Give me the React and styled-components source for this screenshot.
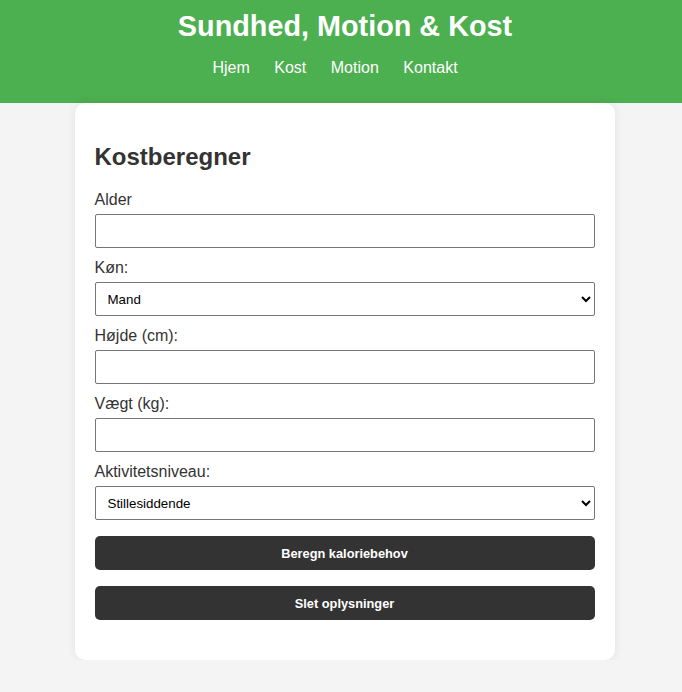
import React from "react"
import styled, { createGlobalStyle } from "styled-components"

const GlobalStyle = createGlobalStyle`
  body {
    margin: 0;
    background: #f4f4f4;
    font-family: "Liberation Sans", Arial, sans-serif;
    color: #333;
  }
`

const Header = styled.header`
  background: #4caf50;
  color: #fff;
  text-align: center;
  padding: 10px 0;
`

const Title = styled.h1`
  margin: 0;
  font-size: 28.8px;
  line-height: 32px;
  font-weight: bold;
  padding-left: 8px;
`

const Nav = styled.nav`
  display: flex;
  justify-content: center;
  gap: 24.5px;
  margin: 16px 0;
  padding-right: 12px;
  line-height: 19px;
`

const NavLink = styled.a`
  color: #fff;
  text-decoration: none;
  font-size: 16px;
`

const Page = styled.div`
  padding-left: 7px;
`

const Card = styled.main`
  width: 500px;
  margin: 0 auto;
  padding: 20px 20px 40px;
  background: #fff;
  border-radius: 10px;
  box-shadow: 0 0 10px rgba(0, 0, 0, 0.08);
`

const Heading = styled.h2`
  font-size: 24px;
  line-height: 28px;
  margin: 20px 0 19px;
  color: #333;
`

const Form = styled.form`
  display: flex;
  flex-direction: column;
`

const Label = styled.label`
  font-size: 16px;
  line-height: 19px;
  margin-bottom: 5px;
  color: #333;
`

const Field = styled.input`
  box-sizing: border-box;
  width: 100%;
  height: 34px;
  padding: 8px;
  margin-bottom: 10px;
  border: 1px solid #767676;
  border-radius: 2px;
  font-size: 16px;
  font-family: inherit;
`

const Select = styled.select`
  box-sizing: border-box;
  width: 100%;
  height: 34px;
  padding: 0 4px 0 8px;
  margin-bottom: ${p => p.$last ? "16px" : "10px"};
  border: 1px solid #767676;
  border-radius: 2px;
  background: #fff;
  color: #000;
  font-size: 13.33px;
  font-family: "Liberation Sans", Arial, sans-serif;
`

const Button = styled.button`
  width: 100%;
  height: 34px;
  border: none;
  border-radius: 5px;
  background: #333;
  color: #fff;
  font-size: 12.8px;
  font-weight: bold;
  font-family: "Liberation Sans", Arial, sans-serif;
  margin-bottom: 16px;
  cursor: pointer;
  &:last-child {
    margin-bottom: 0;
  }
`

export default function App() {
  return (
    <>
      <GlobalStyle />
      <Header>
        <Title>Sundhed, Motion &amp; Kost</Title>
        <Nav>
          <NavLink href="#">Hjem</NavLink>
          <NavLink href="#">Kost</NavLink>
          <NavLink href="#">Motion</NavLink>
          <NavLink href="#">Kontakt</NavLink>
        </Nav>
      </Header>
      <Page>
        <Card>
          <Heading>Kostberegner</Heading>
          <Form onSubmit={e => e.preventDefault()}>
            <Label htmlFor="alder">Alder</Label>
            <Field id="alder" type="number" />
            <Label htmlFor="kon">Køn:</Label>
            <Select id="kon" defaultValue="mand">
              <option value="mand">Mand</option>
              <option value="kvinde">Kvinde</option>
            </Select>
            <Label htmlFor="hojde">Højde (cm):</Label>
            <Field id="hojde" type="number" />
            <Label htmlFor="vaegt">Vægt (kg):</Label>
            <Field id="vaegt" type="number" />
            <Label htmlFor="aktivitet">Aktivitetsniveau:</Label>
            <Select id="aktivitet" $last defaultValue="stille">
              <option value="stille">Stillesiddende</option>
              <option value="let">Let aktiv</option>
              <option value="moderat">Moderat aktiv</option>
              <option value="meget">Meget aktiv</option>
            </Select>
            <Button type="submit">Beregn kaloriebehov</Button>
            <Button type="button">Slet oplysninger</Button>
          </Form>
        </Card>
      </Page>
    </>
  )
}
